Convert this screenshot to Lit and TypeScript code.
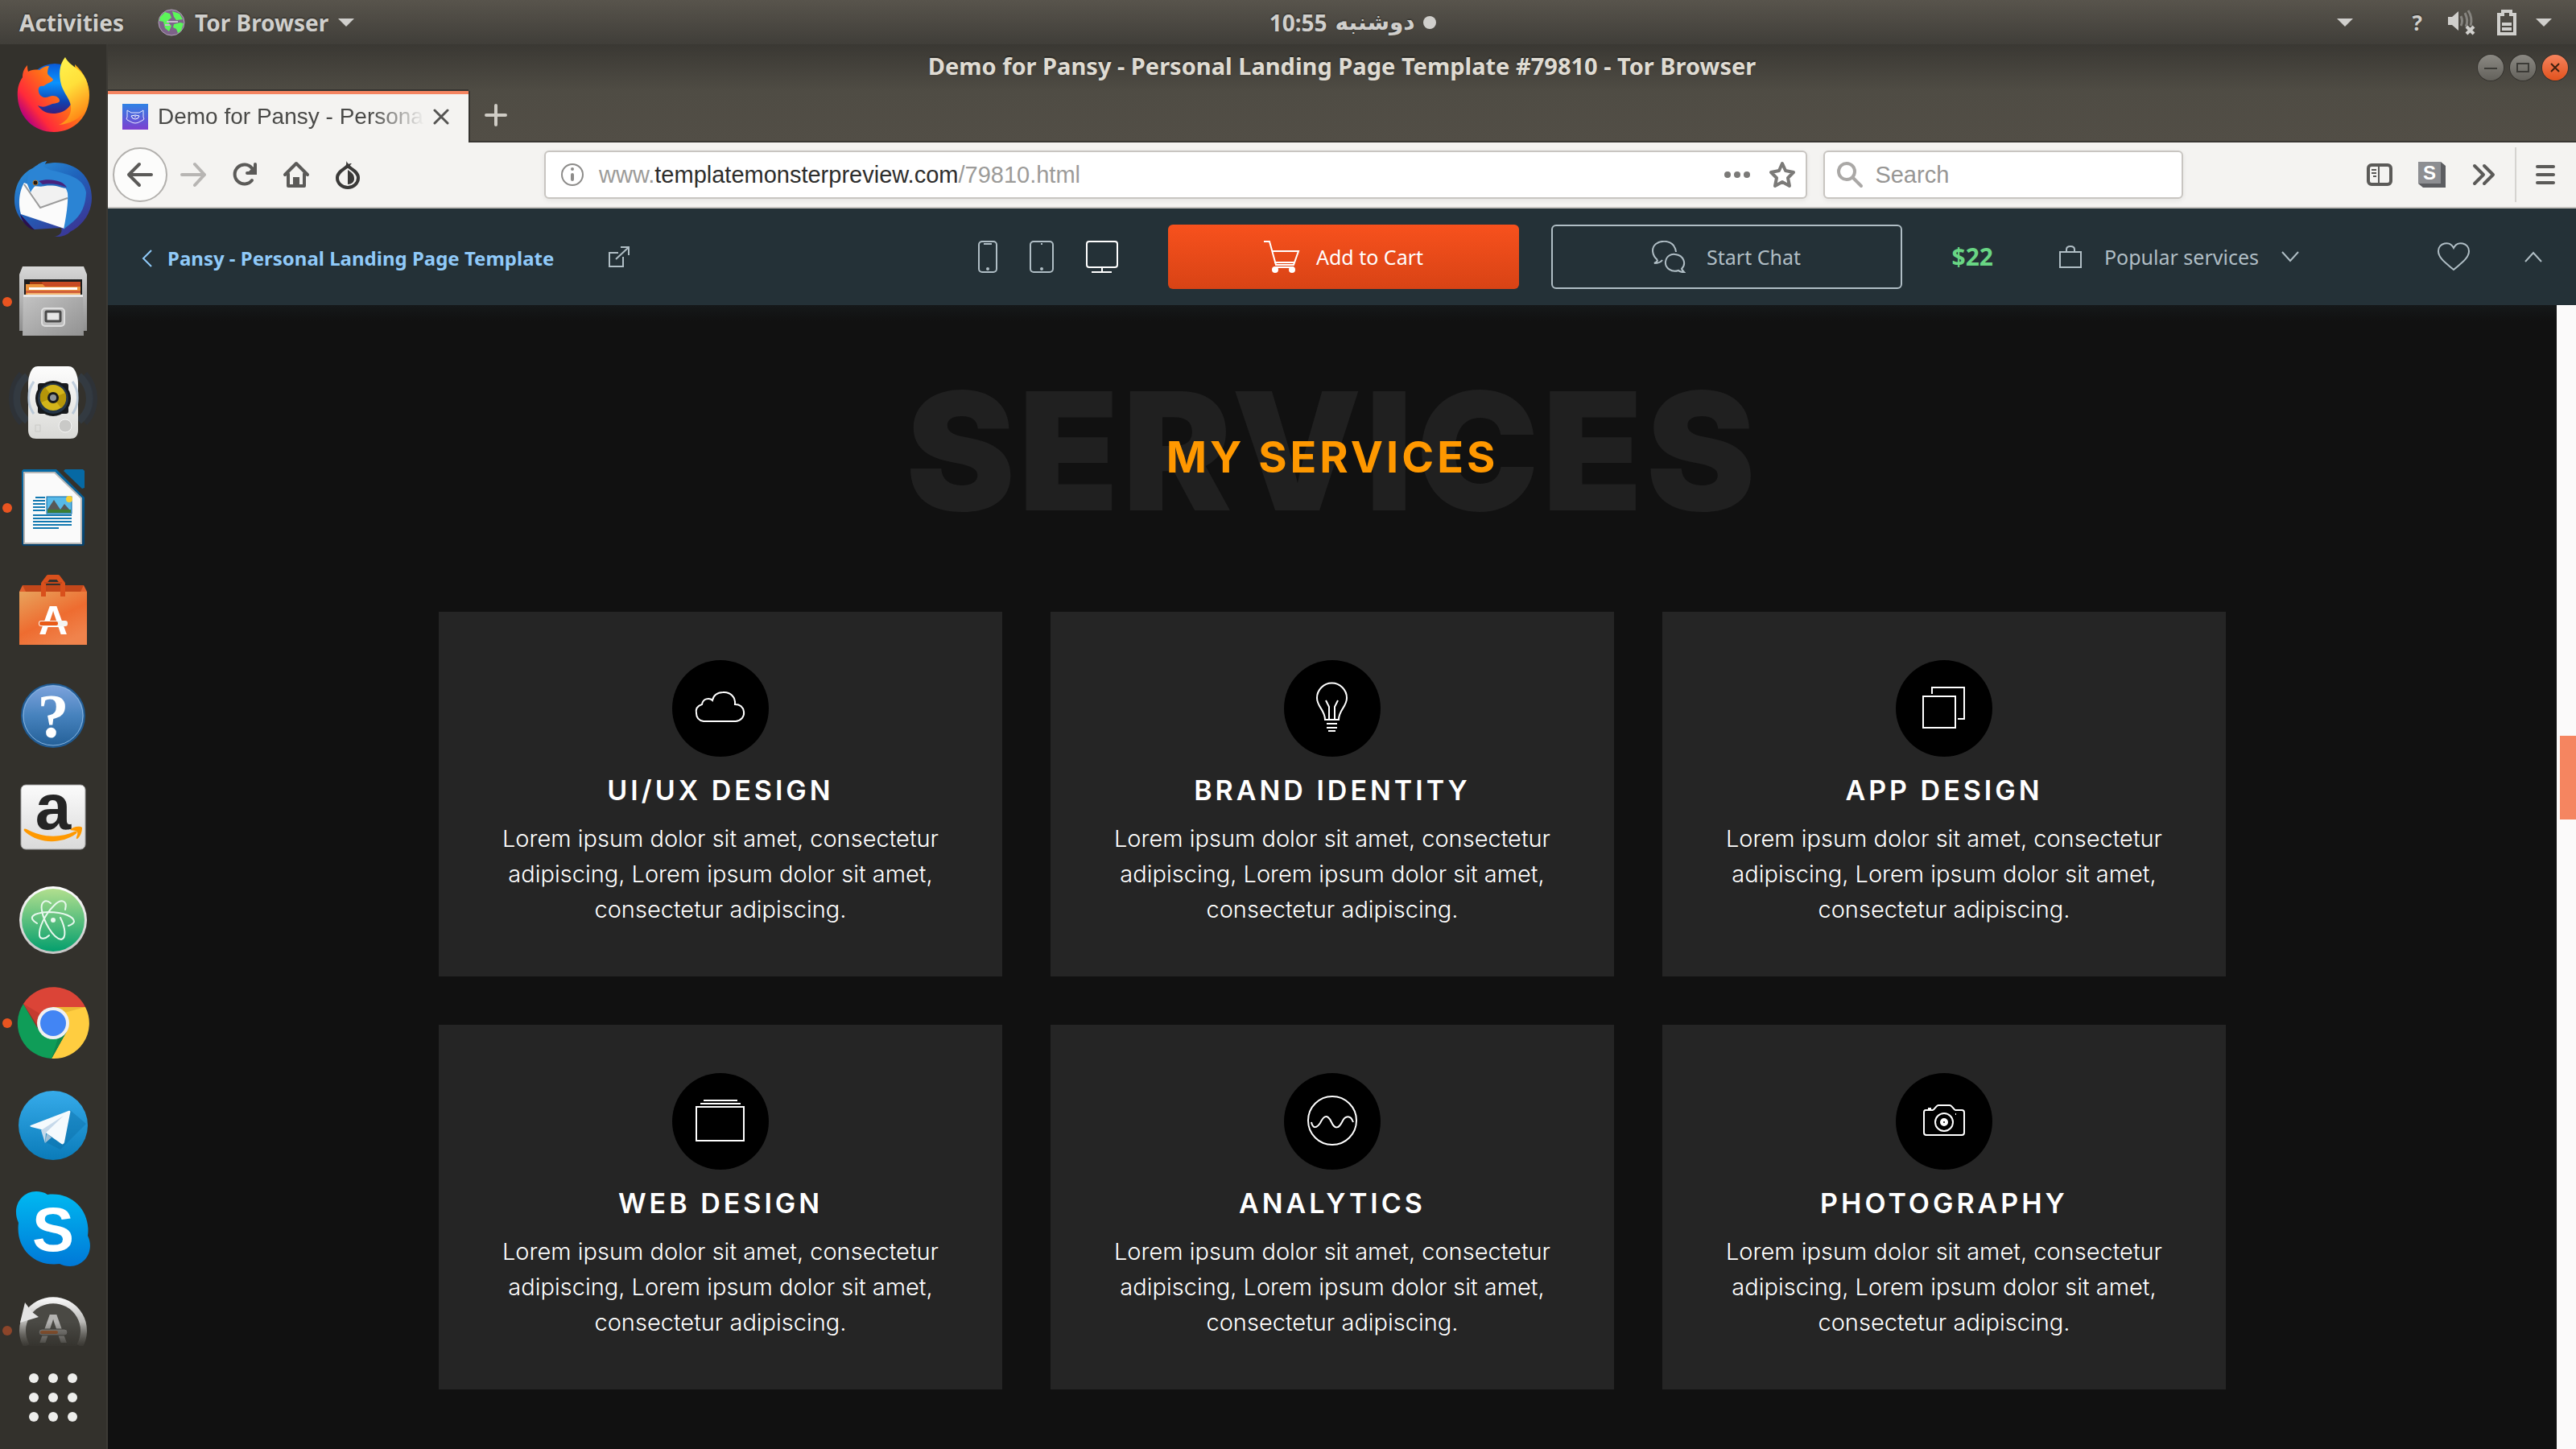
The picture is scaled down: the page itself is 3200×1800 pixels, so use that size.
import { LitElement, html, svg, css, TemplateResult, SVGTemplateResult } from "lit";
import { customElement } from "lit/decorators.js";

interface DockEntry {
  label: string;
  art: TemplateResult;
  fading?: boolean;
}

interface Service {
  title: string;
  art: SVGTemplateResult;
}

const LOREM =
  "Lorem ipsum dolor sit amet, consectetur adipiscing, Lorem ipsum dolor sit amet, consectetur adipiscing.";

const firefox = html`<svg viewBox="0 0 132 96">
  <defs>
    <linearGradient id="ff-body" x1="0.1" y1="0.8" x2="0.9" y2="0.2">
      <stop offset="0" stop-color="#b5007f" /><stop offset="0.2" stop-color="#ff2a3a" />
      <stop offset="0.55" stop-color="#ff6a1a" /><stop offset="1" stop-color="#ffb515" />
    </linearGradient>
    <linearGradient id="ff-tail" x1="0" y1="0" x2="0.3" y2="1">
      <stop offset="0" stop-color="#fff44f" /><stop offset="0.5" stop-color="#ffe03a" /><stop offset="1" stop-color="#ff8a16" />
    </linearGradient>
    <linearGradient id="ff-globe" x1="0.5" y1="0" x2="0.5" y2="1">
      <stop offset="0" stop-color="#0a5ad8" /><stop offset="0.35" stop-color="#0a93ff" />
      <stop offset="0.7" stop-color="#1042b0" /><stop offset="1" stop-color="#4a1067" />
    </linearGradient>
  </defs>
  <circle cx="68" cy="43" r="34" fill="url(#ff-globe)" />
  <path fill="url(#ff-body)" d="M34 11c-5 5-6 10-6 15-5 7-7 15-6 26 2 24 20 42 45 42 26 0 44-20 44-46 0-14-6-27-18-38 1 14 2 24 0 33-1 18-12 28-27 28-9 0-15-4-19-10 8 4 12 0 18-2 5-1 9-1 9-4 0-4-6-8-13-5-7 3-12-1-13-6-1-5 1-8 6-7 5-4 11-5 12-8-1-3-7-5-7-8 0-4 1-7 2-9-5 0-9 2-12 5-6-1-11 0-14 2-1-3-1-6-1-8z" />
  <path fill="url(#ff-tail)" d="M81 1c-8 10-8 22-5 34 4 13 14 21 12 32-1 8-7 15-15 18 14-1 26-7 33-18 6-12 5-27 1-38-5-13-21-17-26-28z" />
</svg>`;

const thunderbird = html`<svg viewBox="0 0 132 96">
  <defs>
    <linearGradient id="tb-body" x1="0" y1="0" x2="0.7" y2="1">
      <stop offset="0" stop-color="#2f9ae0" /><stop offset="0.5" stop-color="#1f63bb" /><stop offset="1" stop-color="#3b3595" />
    </linearGradient>
  </defs>
  <path fill="url(#tb-body)" d="M58 2c-6 1-10 3-13 7-17 6-27 21-27 42 0 15 8 28 25 36l33-2c2 6-2 10-9 11 10 1 18-3 20-6 14-7 27-22 27-42C114 22 96 4 68 4c-4 0-9 1-13 2z" />
  <path fill="#29104f" d="M25 68l18 20c-10-3-16-11-18-20z" />
  <path fill="#fbfbfb" d="M30 29c-6 10-8 26-4 39l54 18c6-14 9-28 4-50L40 33z" />
  <path fill="#f1f1f1" d="M39 40c12-10 33-9 44-2v10L50 60z" />
  <path fill="none" stroke="#9b9b9b" stroke-width="2" d="M30 31l20 29 34-12" />
  <path fill="#2b84d4" d="M58 2c-20 6-25 17-24 29l4 10c3-7 9-12 18-13 12-1 26 2 28 14 1 12-2 30-5 45 12-10 27-18 28-46C104 22 82 18 62 13l-8-4z" />
  <path fill="#46237e" d="M48 27c13-4 31-1 35 8-8-4-20-6-30-4z" />
  <circle cx="44" cy="29" r="3" fill="#241a10" stroke="#b9772b" />
</svg>`;

const files = html`<svg viewBox="0 0 132 96">
  <defs>
    <linearGradient id="fi-a" x1="0" y1="0" x2="0" y2="1"><stop offset="0" stop-color="#d8d8d8" /><stop offset="1" stop-color="#8f8f8f" /></linearGradient>
    <linearGradient id="fi-b" x1="0" y1="0" x2="1" y2="1"><stop offset="0" stop-color="#c4c4c4" /><stop offset="1" stop-color="#929292" /></linearGradient>
  </defs>
  <path fill="url(#fi-a)" d="M28 5h76l4 10v70H24V15z" />
  <rect x="30" y="21" width="72" height="22" fill="#1d1d1d" />
  <path fill="#a83c12" d="M37 24h60v10H37z" /><path fill="#c74a22" d="M52 24h48v8H54z" />
  <path fill="#ed953d" d="M32 27h21l3 3h44v12H32z" /><path fill="#fff" d="M36 31h60v3H36z" /><path fill="#d1603a" d="M32 35h68v3H32z" /><path fill="#f3b772" d="M34 38h66v4H34z" />
  <path fill="url(#fi-b)" d="M29 40h74l1 51H28z" /><path fill="#e8e8e8" d="M29 40h74v3H29z" />
  <rect x="52" y="57" width="28" height="22" rx="4" fill="#bdbdbd" stroke="#dedede" stroke-width="2" />
  <rect x="57" y="61" width="18" height="12" rx="1" fill="#e6e6e6" stroke="#4a4a4a" stroke-width="3" />
  <circle cx="9" cy="49" r="6" fill="#e95420" />
</svg>`;

const rhythmbox = html`<svg viewBox="0 0 132 96">
  <defs><linearGradient id="rb" x1="0" y1="0" x2="0" y2="1"><stop offset="0" stop-color="#fdfdfd" /><stop offset="1" stop-color="#d9d9d6" /></linearGradient></defs>
  <g fill="none" stroke="#34465c" stroke-width="9" opacity="0.45"><path d="M34 13a36 36 0 0 0 0 56M98 13a36 36 0 0 1 0 56" /></g>
  <path fill="none" stroke="#2b3440" stroke-width="6" opacity="0.6" d="M26 10a46 46 0 0 0 0 62M106 10a46 46 0 0 1 0 62" />
  <path fill="url(#rb)" d="M47 1h38c5 0 7 3 9 7 2 5 3 9 3 14v58c0 8-4 11-10 11H45c-6 0-10-3-10-11V22c0-5 1-9 3-14 2-4 4-7 9-7z" />
  <g fill="none" stroke="#9fb6cf" stroke-width="3" opacity="0.6"><path d="M42 20a34 34 0 0 0 0 40M90 20a34 34 0 0 1 0 40" /></g>
  <rect x="47" y="22" width="38" height="38" rx="3" fill="#191b1e" />
  <circle cx="66" cy="41" r="22" fill="#15181b" /><circle cx="66" cy="41" r="19" fill="#253547" />
  <circle cx="66" cy="40" r="16" fill="#d3b51a" /><path fill="#b59509" d="M66 40l15-6a16 16 0 0 1-5 19zM66 40l-15 6a16 16 0 0 1 5-19z" />
  <circle cx="66" cy="40" r="7" fill="#17191b" /><circle cx="66" cy="40" r="4" fill="#8e9499" />
  <circle cx="81" cy="75" r="8" fill="#c9c9c7" stroke="#f5f5f4" stroke-width="1" /><rect x="44" y="74" width="6" height="8" fill="none" stroke="#c9c9c6" />
</svg>`;

const writer = html`<svg viewBox="0 0 132 96">
  <defs><linearGradient id="wr" x1="0" y1="0" x2="0" y2="1"><stop offset="0" stop-color="#0669a4" /><stop offset="1" stop-color="#07406a" /></linearGradient></defs>
  <path fill="url(#wr)" d="M29 1h41l35 35v58l-2 3H29l-2-3V3z" />
  <path fill="#fafafa" stroke="#b6b6b6" stroke-width="2" d="M30 5h38l33 32v56H30z" />
  <path fill="#0669a4" d="M79 3l2-2h22l2 2v21l-3 1z" />
  <g stroke="#1278b0" stroke-width="2"><path d="M44 36h12M41 40h15M41 44h15M41 48h15M41 52h15M41 58h48M41 62h48M41 66h48M41 70h48M41 74h32" /></g>
  <rect x="58" y="35" width="31" height="21" fill="#57b9e8" stroke="#0c6ba5" /><circle cx="86" cy="38" r="4" fill="#f8cf32" />
  <path fill="#575757" d="M59 51l8-12 8 12 5-7 7 8z" /><path fill="#3b7d33" d="M59 51h29v4H59z" />
  <circle cx="9" cy="49" r="6" fill="#e95420" />
</svg>`;

const software = html`<svg viewBox="0 0 132 96">
  <defs><linearGradient id="so" x1="0" y1="0" x2="0.6" y2="1"><stop offset="0" stop-color="#e8a35c" /><stop offset="0.6" stop-color="#ee6c30" /><stop offset="1" stop-color="#f0834c" /></linearGradient></defs>
  <path fill="#c3471a" d="M28 17h76v10H28z" /><path fill="#e2602d" d="M24 25l4-8 4 8zM108 25l-4-8-4 8z" />
  <path fill="url(#so)" d="M24 25h84v66H24z" />
  <path fill="none" stroke="#d9501c" stroke-width="6" stroke-linejoin="round" d="M54 31V15l6-8h12l6 8v16" /><path stroke="#c3471a" stroke-width="2" d="M55 14h22" />
  <text x="66" y="78" text-anchor="middle" class="glyph glyph-bag">A</text>
  <rect x="48" y="61" width="36" height="7" rx="3" fill="#f4f4f2" /><rect x="49" y="62" width="23" height="5" rx="2" fill="#e95a17" />
</svg>`;

const help = html`<svg viewBox="0 0 132 96">
  <defs><linearGradient id="he" x1="0" y1="0" x2="0" y2="1"><stop offset="0" stop-color="#7fa4de" /><stop offset="0.5" stop-color="#4682bd" /><stop offset="1" stop-color="#235f97" /></linearGradient></defs>
  <circle cx="66" cy="51" r="39" fill="url(#he)" stroke="#1f5a92" stroke-width="2" /><circle cx="66" cy="51" r="37" fill="none" stroke="#86b3de" stroke-width="1" />
  <text x="66" y="78" text-anchor="middle" class="glyph glyph-help">?</text>
</svg>`;

const amazon = html`<svg viewBox="0 0 132 96">
  <defs><linearGradient id="am" x1="0" y1="0" x2="0" y2="1"><stop offset="0" stop-color="#fbfbfb" /><stop offset="1" stop-color="#dadada" /></linearGradient></defs>
  <rect x="26" y="9" width="80" height="80" rx="6" fill="url(#am)" stroke="#9d9d9d" />
  <text x="66" y="64" text-anchor="middle" class="glyph glyph-amazon">a</text>
  <path fill="#ff9900" d="M30 64c1-1 2 0 3 0 19 11 43 11 59 3 3-1 5 1 2 3-18 13-46 12-62-2-2-2-3-3-2-4z" />
  <path fill="#ff9900" d="M87 65c4-5 13-5 15-3 0 5-2 11-6 14-2 0-1-2 0-5 1-4 0-5-9-6z" />
</svg>`;

const atom = html`<svg viewBox="0 0 132 96">
  <defs>
    <linearGradient id="at" x1="0" y1="0" x2="0" y2="1"><stop offset="0" stop-color="#b2df8e" /><stop offset="1" stop-color="#049f6d" /></linearGradient>
    <linearGradient id="at-rim" x1="0" y1="0" x2="0" y2="1"><stop offset="0" stop-color="#ffffff" /><stop offset="1" stop-color="#c4c4c4" /></linearGradient>
  </defs>
  <circle cx="66" cy="49" r="42" fill="url(#at-rim)" /><circle cx="66" cy="49" r="39" fill="url(#at)" />
  <g fill="none" stroke="#e8f8ee" stroke-width="2" stroke-linecap="round">
    <path d="M46 53C34 46 40 40 60 39C80 39 92 45 92 51C91 54 88 55 85 56" />
    <path d="M63 28C56 22 50 27 52 37C54 50 66 72 76 73C83 71 81 58 75 46" />
    <path d="M81 36C84 24 76 22 67 31C56 42 48 58 49 68C50 74 57 72 61 68" />
  </g>
  <circle cx="66" cy="49" r="3" fill="#e8f8ee" />
</svg>`;

const chrome = html`<svg viewBox="0 0 132 96">
  <path fill="#ffcd40" d="M66 29h40a44 44 0 0 1-42 64l19-34z" />
  <path fill="#0f9d58" d="M64 93A44 44 0 0 1 29 25l20 34 34 0z" />
  <path fill="#db4437" d="M29 25a44 44 0 0 1 77 4H66c-11 0-19 10-19 24z" />
  <path fill="#b5362b" opacity="0.6" d="M29 25l17 30c0-8 2-13 5-17z" /><path fill="#0b7d46" opacity="0.6" d="M81 62L64 93l8-25z" />
  <path fill="#e0a92f" opacity="0.6" d="M66 29h40l-26 7z" />
  <circle cx="66" cy="49" r="20" fill="#f1f1f1" /><circle cx="66" cy="49" r="16" fill="#4285f4" />
  <circle cx="9" cy="49" r="6" fill="#e95420" />
</svg>`;

const telegram = html`<svg viewBox="0 0 132 96">
  <defs><linearGradient id="te" x1="0" y1="0" x2="0" y2="1"><stop offset="0" stop-color="#36abea" /><stop offset="1" stop-color="#0a7bb9" /></linearGradient></defs>
  <circle cx="66" cy="48" r="43" fill="url(#te)" />
  <path fill="#0a6ba5" opacity="0.4" d="M87 29l20 17-32 32-18-9z" />
  <path fill="#f5fafd" d="M38 48l47-18c2-1 3 0 2 3l-7 36c-1 3-3 3-5 1L58 58l-7-5-12-3c-2-1-2-1-1-2z" />
  <path fill="#c6d9ea" d="M51 54l28-18-22 21-1 13z" /><path fill="#9fbdd4" d="M58 58l6 5-8 7z" />
</svg>`;

const skype = html`<svg viewBox="0 0 132 96">
  <defs><linearGradient id="sk" x1="0" y1="0" x2="0" y2="1"><stop offset="0" stop-color="#00b9f1" /><stop offset="1" stop-color="#0078d7" /></linearGradient></defs>
  <path fill="url(#sk)" d="M45 2c5 0 10 1 14 4 32-4 54 22 50 51 9 19-4 38-22 38-5 0-9-1-13-3-31 4-55-19-51-51C14 22 26 2 45 2z" />
  <text x="66" y="76" text-anchor="middle" class="glyph glyph-skype">S</text>
</svg>`;

const updater = html`<svg viewBox="0 0 132 66">
  <defs>
    <linearGradient id="up" x1="0" y1="0" x2="0" y2="1"><stop offset="0" stop-color="#f5f5f5" /><stop offset="1" stop-color="#77756f" /></linearGradient>
    <linearGradient id="up-fade" x1="0" y1="0" x2="0" y2="1"><stop offset="0.55" stop-color="#33312c" stop-opacity="0" /><stop offset="1" stop-color="#33312c" stop-opacity="0.9" /></linearGradient>
  </defs>
  <circle cx="66" cy="47" r="35" fill="#4a4944" />
  <path fill="none" stroke="url(#up)" stroke-width="8" d="M33 66A38 38 0 1 1 99 66" />
  <path fill="#e4e4e4" d="M31 12l-6 25 23-7-8-6z" />
  <text x="66" y="62" text-anchor="middle" class="glyph glyph-up">A</text>
  <rect x="48" y="45" width="36" height="8" rx="4" fill="#8b8a87" stroke="#454440" /><rect x="50" y="47" width="22" height="4" rx="2" fill="#a85b2b" />
  <path fill="url(#up-fade)" d="M14 0h104v66H14z" />
  <circle cx="9" cy="47" r="6" fill="#8c452a" />
</svg>`;

const DOCK: DockEntry[] = [
  { label: "Firefox", art: firefox },
  { label: "Thunderbird", art: thunderbird },
  { label: "Files", art: files },
  { label: "Rhythmbox", art: rhythmbox },
  { label: "Writer", art: writer },
  { label: "Software", art: software },
  { label: "Help", art: help },
  { label: "Amazon", art: amazon },
  { label: "Atom", art: atom },
  { label: "Chrome", art: chrome },
  { label: "Telegram", art: telegram },
  { label: "Skype", art: skype },
  { label: "Updater", art: updater, fading: true },
];

const SERVICES: Service[] = [
  {
    title: "UI/UX DESIGN",
    art: svg`<path d="M39 76H79C86 75 90 70 89 64C88 58 84 55 78 55C79 46 72 39 63 40C56 40 51 44 50 50C46 46 38 48 37 55C31 57 29 61 30 66C30 71 33 75 39 76Z" />`,
  },
  {
    title: "BRAND IDENTITY",
    art: svg`<path d="M51 74C51 62 41 58 41 47a18 18 0 0 1 37 0C78 58 68 62 68 74Z" /><path d="M52 50l4 8v16M67 50l-4 8v16M53 79h13M53 84h13M55 88h9" />`,
  },
  {
    title: "APP DESIGN",
    art: svg`<path d="M34 45h40v39H34zM45 42V34H85V73H77" />`,
  },
  {
    title: "WEB DESIGN",
    art: svg`<path d="M30 42h59v42H30zM39 34h42M35 38h50" />`,
  },
  {
    title: "ANALYTICS",
    art: svg`<circle cx="60" cy="59" r="30" /><path d="M34 61C36 70 41 68 45 62C48 56 53 48 59 61C63 70 68 69 72 61C76 52 83 52 86 61" />`,
  },
  {
    title: "PHOTOGRAPHY",
    art: svg`<path d="M37 46h9c2 0 4-6 7-6h14c3 0 5 6 7 6h8q3 0 3 3v25q0 3-3 3H38q-3 0-3-3V49q0-3 2-3zM40 44h4" /><circle cx="60" cy="61" r="11" /><circle cx="60" cy="61" r="3" class="heavy" /><path d="M74 51h1" />`,
  },
];

@customElement("desktop-dock")
export class DesktopDock extends LitElement {
  static styles = css`
    :host { display: block; background: #33312c; border-right: 2px solid #3c3a35; }
    .list { display: flex; flex-direction: column; gap: 32px; padding-top: 15px; }
    button { display: block; border: 0; padding: 0; margin: 0; background: none; }
    .app { width: 132px; height: 96px; }
    .fading { height: 66px; }
    .grid { width: 132px; height: 60px; margin-top: 2px; }
    svg { display: block; width: 100%; height: 100%; }
    .glyph { font-family: "Liberation Sans", sans-serif; font-weight: 700; fill: #fff; }
    .glyph-bag { font-size: 50px; }
    .glyph-help { font-family: "Liberation Serif", serif; font-size: 78px; }
    .glyph-amazon { font-size: 80px; fill: #252525; }
    .glyph-skype { font-size: 78px; }
    .glyph-up { font-size: 50px; fill: #b4b3b1; }
  `;

  render() {
    const steps = [0, 1, 2];
    return html`<nav class="list" aria-label="Applications">
      ${DOCK.map((d) => html`<button class="app ${d.fading ? "fading" : ""}" aria-label=${d.label}>${d.art}</button>`)}
      <button class="grid" aria-label="Show applications">
        <svg viewBox="0 0 132 60" fill="#eeeeec">
          ${steps.map((r) => steps.map((c) => svg`<circle cx=${42 + c * 24} cy=${6 + r * 24} r="6" />`))}
        </svg>
      </button>
    </nav>`;
  }
}

@customElement("system-bar")
export class SystemBar extends LitElement {
  static styles = css`
    :host {
      display: grid; grid-template-columns: 1573fr auto 1413fr; align-items: center; height: 55px;
      background: linear-gradient(#58544c, #403e39); color: #d0cfcc;
      font: 700 28px/40px "Noto Sans", "Open Sans", "DejaVu Sans", sans-serif; text-shadow: 0 -1px 2px #2a2925;
    }
    button { font: inherit; color: inherit; background: none; border: 0; padding: 0; display: flex; align-items: center; text-shadow: inherit; }
    svg { display: block; }
    .left, .right { display: flex; align-items: center; }
    .left { padding-left: 24px; gap: 42px; }
    .app { gap: 12px; }
    .clock { gap: 10px; white-space: nowrap; }
    .day { font-family: "DejaVu Sans", sans-serif; }
    .right { justify-content: flex-end; padding-right: 30px; }
    .menu { margin-right: 74px; }
    .unknown { margin-right: 32px; font-size: 26px; }
    .sound { margin-right: 27px; }
    .battery { margin-right: 24px; }
  `;

  render() {
    const caret = html`<svg width="20" height="12" viewBox="0 0 20 12"><path fill="#d0cfcc" d="M0 1h20L10 11z" /></svg>`;
    return html`
      <div class="left">
        <button>Activities</button>
        <button class="app">
          <svg width="34" height="34" viewBox="0 0 34 34">
            <circle cx="17" cy="17" r="16" fill="#7d6389" stroke="#b5a4bd" />
            <path fill="#5cf65a" d="M3 10l6-6 6 2 2 5-4 3 1 4 3 3-3 7-5-4-2-8-5-1zM20 19l8-2 4 1-3 9-4 3-2-5-4-2zM18 3l9 3 4 7-8 1-3-4z" />
            <path stroke="#c9b9d0" stroke-width="2" d="M11 16h10M9 20h6M20 16h5" />
          </svg>
          Tor Browser ${caret}
        </button>
      </div>
      <button class="clock">
        <span>10:55</span>
        <span class="day" dir="rtl">دوشنبه</span>
        <svg width="16" height="16" viewBox="0 0 16 16"><circle cx="8" cy="8" r="8" fill="#d0cfcc" /></svg>
      </button>
      <div class="right">
        <button class="menu" aria-label="Menu">${caret}</button>
        <button class="unknown" aria-label="Network">?</button>
        <button class="sound" aria-label="Sound">
          <svg width="34" height="32" viewBox="0 0 34 32">
            <path fill="#d0cfcc" d="M0 9h5l8-7v24l-8-7H0z" />
            <g fill="none" stroke="#85837e" stroke-width="3"><path d="M16 8q3 6 0 12M21 4q5 10 1 17M25 1q6 9 3 19" /></g>
            <path stroke="#d0cfcc" stroke-width="4" d="M23 21l9 9M32 21l-9 9" />
          </svg>
        </button>
        <button class="battery" aria-label="Battery">
          <svg width="24" height="32" viewBox="0 0 24 32">
            <path fill="none" stroke="#d0cfcc" stroke-width="4" d="M2 6h5V2h10v4h5v24H2z" />
            <path fill="#d0cfcc" d="M6 16h12v4H6zM6 22h12v4H6z" />
          </svg>
        </button>
        <button aria-label="System menu">${caret}</button>
      </div>
    `;
  }
}

@customElement("browser-chrome")
export class BrowserChrome extends LitElement {
  static styles = css`
    :host { display: block; font: 28px/40px "Liberation Sans", Arial, sans-serif; color: #4a4a48; }
    button { font: inherit; color: inherit; background: none; border: 0; padding: 0; display: flex; align-items: center; justify-content: center; flex: none; }
    svg { display: block; flex: none; }
    .title {
      display: grid; grid-template-columns: 1fr auto 1fr; align-items: center; height: 58px; padding: 0 10px;
      background: linear-gradient(#3a3833, #4f4c44); color: #dfdbd2;
      font: 700 29px/44px "Noto Sans", "Open Sans", sans-serif; text-shadow: 0 -2px 1px #2d2c28; white-space: nowrap;
    }
    .name { grid-column: 2; padding-bottom: 4px; }
    .controls { display: flex; justify-content: flex-end; gap: 8px; }
    .ctl { width: 32px; height: 32px; border-radius: 50%; background: linear-gradient(#8b8983, #63615b); box-shadow: 0 0 0 1px #34322e; }
    .close { background: linear-gradient(#f5835d, #e2521d); }
    .tabs { display: flex; height: 64px; background: linear-gradient(#4f4c44, #524e46); box-shadow: inset 0 -2px #393733; }
    .tab { display: flex; align-items: center; width: 448px; box-sizing: border-box; background: #f4f3f1; border-top: 4px solid #f58460; padding: 0 24px 4px 18px; box-shadow: 0 -2px #35332f, 2px 0 #35332f; }
    .label { flex: 1; min-width: 0; margin: 0 10px 0 12px; overflow: hidden; white-space: nowrap; -webkit-mask-image: linear-gradient(90deg, #000 80%, transparent); mask-image: linear-gradient(90deg, #000 80%, transparent); }
    .add { padding: 0 20px; height: 60px; }
    .bar {
      display: grid; grid-template-columns: 536px minmax(0, 1568fr) minmax(0, 466fr) minmax(0, 228fr) auto; align-items: center;
      height: 80px; background: #f4f3f1; border-bottom: 2px solid #c4c2bf; padding: 0 22px 0 6px; font-size: 29px;
    }
    .nav { display: flex; align-items: center; gap: 28px; }
    .back { width: 68px; height: 68px; box-sizing: border-box; border: 2px solid #b2b0ad; border-radius: 50%; background: #fcfcfb; margin-right: -14px; }
    .field { display: flex; align-items: center; box-sizing: border-box; height: 60px; background: #fff; border: 2px solid #c8c5c1; border-radius: 6px; box-shadow: 0 2px 6px #00000012; min-width: 0; }
    .url { padding: 0 12px 0 18px; }
    .address { flex: 1; margin-left: 18px; color: #9c9b99; white-space: nowrap; }
    .address b { font-weight: 400; color: #2d2d2c; }
    .more { margin-right: 22px; }
    .search { margin-left: 20px; padding: 0 14px; gap: 14px; }
    input { flex: 1; min-width: 0; border: 0; outline: 0; background: none; font: inherit; color: #333; padding: 0; }
    input::placeholder { color: #979694; opacity: 1; }
    .tools { grid-column: 5; display: flex; align-items: center; gap: 32px; }
    .rule { width: 2px; height: 68px; background: #d5d3d0; margin: 0 -12px 0 -10px; }
  `;

  render() {
    return html`
      <div class="title">
        <span class="name">Demo for Pansy - Personal Landing Page Template #79810 - Tor Browser</span>
        <div class="controls">
          <button class="ctl" aria-label="Minimize"><svg width="32" height="32" viewBox="0 0 32 32"><path stroke="#3c3b37" stroke-width="2" d="M8 17h16" /></svg></button>
          <button class="ctl" aria-label="Maximize"><svg width="32" height="32" viewBox="0 0 32 32"><path fill="none" stroke="#3c3b37" stroke-width="2" d="M9 11h14v10H9z" /></svg></button>
          <button class="ctl close" aria-label="Close"><svg width="32" height="32" viewBox="0 0 32 32"><path stroke="#3c2010" stroke-width="2" d="M11 11l10 10M21 11L11 21" /></svg></button>
        </div>
      </div>
      <div class="tabs">
        <div class="tab">
          <svg width="32" height="32" viewBox="0 0 32 32">
            <defs><linearGradient id="fav" x1="0" y1="0" x2="0" y2="1"><stop offset="0" stop-color="#2f82e4" /><stop offset="1" stop-color="#7d3fd0" /></linearGradient></defs>
            <path fill="url(#fav)" d="M0 0h32v32H0z" />
            <path fill="none" stroke="#e6e6ff" stroke-width="1" d="M6 8l5 3h10l5-3v9l1 1-1 2-4 2q-6 4-12 0l-4-2-1-2 1-1z" />
            <path fill="none" stroke="#fff" stroke-width="1" d="M11 15q5-2 10 0-1 4-5 4t-5-4zM15 16h2" />
          </svg>
          <span class="label">Demo for Pansy - Personal Landing</span>
          <button aria-label="Close tab"><svg width="20" height="20" viewBox="0 0 20 20"><path stroke="#555452" stroke-width="3" stroke-linecap="round" d="M2 2l16 16M18 2L2 18" /></svg></button>
        </div>
        <button class="add" aria-label="New tab"><svg width="28" height="28" viewBox="0 0 28 28"><path stroke="#cfccc5" stroke-width="4" stroke-linecap="round" d="M14 2v24M2 14h24" /></svg></button>
      </div>
      <div class="bar">
        <div class="nav">
          <button class="back" aria-label="Back"><svg width="36" height="36" viewBox="0 0 36 36"><path fill="none" stroke="#5b5a58" stroke-width="4" stroke-linecap="round" stroke-linejoin="round" d="M17 5L4 18l13 13M4 18h28" /></svg></button>
          <button aria-label="Forward"><svg width="36" height="36" viewBox="0 0 36 36"><path fill="none" stroke="#b7b5b3" stroke-width="4" stroke-linecap="round" stroke-linejoin="round" d="M20 5l12 13-12 13M32 18H4" /></svg></button>
          <button aria-label="Reload"><svg width="36" height="36" viewBox="0 0 36 36"><path fill="none" stroke="#5b5a58" stroke-width="4" stroke-linecap="round" d="M27 25A12 12 0 1 1 27 10M31 5v11H21" /><path fill="#5b5a58" d="M31 6v10H21z" /></svg></button>
          <button aria-label="Home"><svg width="36" height="36" viewBox="0 0 36 36"><path fill="none" stroke="#5b5a58" stroke-width="4" stroke-linecap="round" stroke-linejoin="round" d="M4 18L18 4l14 14M8 17v15h20V17" /><path fill="#5b5a58" d="M14 21h8v11h-8z" /></svg></button>
          <button aria-label="Tor circuit"><svg width="36" height="36" viewBox="0 0 36 36"><path fill="none" stroke="#3a3938" stroke-width="4" d="M18 7C14 11 5 14 5 22a13 12 0 0 0 26 0C31 14 22 11 18 7z" /><path fill="#3a3938" d="M16 1c1 3-1 5 0 9h5c-1-3 0-4 2-6-2 0-3 0-4 1zM18 12c6 4 8 6 8 11 0 4-3 7-8 7z" /></svg></button>
        </div>
        <div class="field url">
          <svg width="30" height="30" viewBox="0 0 30 30"><circle cx="15" cy="15" r="13" fill="none" stroke="#8d8c8a" stroke-width="2" /><path stroke="#8d8c8a" stroke-width="4" stroke-linecap="round" d="M15 15v6M15 8v0" /></svg>
          <span class="address" role="textbox" aria-label="Address">www.<b>templatemonsterpreview.com</b>/79810.html</span>
          <button class="more" aria-label="Page actions"><svg width="34" height="10" viewBox="0 0 34 10" fill="#7b7a78"><circle cx="5" cy="5" r="4" /><circle cx="17" cy="5" r="4" /><circle cx="29" cy="5" r="4" /></svg></button>
          <button aria-label="Bookmark"><svg width="34" height="34" viewBox="0 0 34 34"><path fill="none" stroke="#7b7a78" stroke-width="4" stroke-linejoin="round" d="M17 3l4 9 10 2-7 7 2 10-9-5-9 5 2-10-7-7 10-2z" /></svg></button>
        </div>
        <label class="field search">
          <svg width="34" height="34" viewBox="0 0 34 34"><circle cx="13" cy="13" r="10" fill="none" stroke="#aaa8a6" stroke-width="4" /><path stroke="#aaa8a6" stroke-width="4" stroke-linecap="round" d="M21 21l10 10" /></svg>
          <input type="text" placeholder="Search" aria-label="Search" />
        </label>
        <div class="tools">
          <button aria-label="Sidebars"><svg width="32" height="28" viewBox="0 0 32 28"><rect x="2" y="2" width="28" height="24" rx="4" fill="none" stroke="#5b5a58" stroke-width="4" /><path stroke="#5b5a58" stroke-width="2" d="M15 3v22M6 8h6M6 12h6M8 16h4" /></svg></button>
          <button aria-label="NoScript"><svg width="34" height="32" viewBox="0 0 34 32"><path fill="#5c5d61" d="M28 0l6 5v27H6l-6-5z" /><path fill="#8d8e92" d="M0 0h28v27H0z" /><text x="14" y="22" text-anchor="middle" font-size="24" font-weight="700" fill="#fff">S</text></svg></button>
          <button aria-label="More tools"><svg width="32" height="28" viewBox="0 0 32 28"><path fill="none" stroke="#5b5a58" stroke-width="4" stroke-linecap="round" stroke-linejoin="round" d="M4 3l11 11L4 25M16 3l11 11-11 11" /></svg></button>
          <span class="rule"></span>
          <button aria-label="Open menu"><svg width="32" height="28" viewBox="0 0 32 28"><path stroke="#5b5a58" stroke-width="4" stroke-linecap="round" d="M6 4h20M6 14h20M6 24h20" /></svg></button>
        </div>
      </div>
    `;
  }
}

@customElement("preview-header")
export class PreviewHeader extends LitElement {
  static styles = css`
    :host { display: flex; align-items: center; height: 120px; padding: 0 42px; background: #243137; color: #b0bec5; font: 25px/40px "Noto Sans", "Open Sans", sans-serif; white-space: nowrap; }
    svg { display: block; flex: none; fill: none; stroke: currentColor; stroke-width: 2; }
    a { color: #90caf9; text-decoration: none; font-size: 24px; font-weight: 700; display: flex; align-items: center; gap: 18px; padding-top: 4px; }
    button { font: inherit; color: inherit; background: none; border: 0; padding: 0; display: flex; align-items: center; justify-content: center; flex: none; }
    .lead { flex: 1; display: flex; align-items: center; gap: 68px; }
    .out { color: #b0bec5; }
    .devices { display: flex; align-items: center; gap: 40px; margin-right: 62px; }
    .desktop { color: #fff; }
    .action { width: 436px; height: 80px; box-sizing: border-box; border-radius: 6px; gap: 20px; }
    .cart { background: linear-gradient(#f7511d, #d84315); color: #fff; margin-right: 40px; }
    .chat { border: 2px solid #b0bec5; gap: 26px; }
    .price { margin: 0 82px 0 62px; color: #69d684; font-weight: 700; font-size: 30px; }
    .popular { gap: 28px; }
    .end { display: flex; align-items: center; gap: 68px; margin-left: 172px; }
  `;

  render() {
    return html`
      <div class="lead">
        <a href="#template"><svg width="14" height="22" viewBox="0 0 14 22"><path d="M12 1L2 11l10 10" /></svg>Pansy - Personal Landing Page Template</a>
        <button class="out" aria-label="Open in new window"><svg width="26" height="26" viewBox="0 0 26 26"><path d="M12 8H1v17h17V13M9 16L24 2M15 1h10v10" /></svg></button>
      </div>
      <div class="devices">
        <button aria-label="Phone"><svg width="24" height="40" viewBox="0 0 24 40"><rect x="1" y="1" width="22" height="38" rx="4" /><path d="M7 4h10" /><circle cx="12" cy="35" r="1" /></svg></button>
        <button aria-label="Tablet"><svg width="30" height="40" viewBox="0 0 30 40"><rect x="1" y="1" width="28" height="38" rx="4" /><path d="M14 4h2" /><circle cx="15" cy="35" r="1" /></svg></button>
        <button class="desktop" aria-label="Desktop"><svg width="40" height="40" viewBox="0 0 40 40"><rect x="1" y="1" width="38" height="32" rx="3" /><path d="M20 33v5M7 39h25" /></svg></button>
      </div>
      <button class="action cart"><svg width="46" height="40" viewBox="0 0 46 40"><path d="M1 1h7l8 29h22l6-17H12M14 27h25M16 33h22" /><circle cx="15" cy="36" r="3" fill="currentColor" /><circle cx="36" cy="36" r="3" fill="currentColor" /></svg>Add to Cart</button>
      <button class="action chat"><svg width="42" height="40" viewBox="0 0 42 40"><path d="M7 24C0 18-1 9 5 4C12-1 22 0 27 6C29 9 30 11 30 14M7 24c0 2-2 3-4 4c4 0 8-1 10-4" /><path d="M37 35c1 2 2 3 3 4c-3 0-6-1-7-2C25 40 16 34 17 26C18 19 24 16 29 17C40 18 43 29 37 35z" /></svg>Start Chat</button>
      <span class="price">$22</span>
      <button class="popular"><svg width="28" height="28" viewBox="0 0 28 28"><path d="M1 8h26v19H1zM9 8V5q0-4 5-4t5 4v3" /></svg>Popular services<svg width="22" height="14" viewBox="0 0 22 14"><path d="M1 1l10 11L21 1" /></svg></button>
      <div class="end">
        <button aria-label="Favourite"><svg width="40" height="36" viewBox="0 0 40 36"><path d="M20 34C12 27 1 20 1 11C1 1 15-3 20 7C25-3 39 1 39 11C39 20 28 27 20 34z" /></svg></button>
        <button aria-label="Collapse"><svg width="22" height="14" viewBox="0 0 22 14"><path d="M1 13L11 2l10 11" /></svg></button>
      </div>
    `;
  }
}

@customElement("services-section")
export class ServicesSection extends LitElement {
  static styles = css`
    :host { display: block; padding: 81px 60px 74px; background: linear-gradient(#151819, #111 20px); color: #fff; text-align: center; }
    .heading { display: grid; justify-items: center; align-items: center; margin-bottom: 100px; font-family: Inter, "Open Sans", sans-serif; letter-spacing: 4px; }
    .ghost { grid-area: 1 / 1; font-size: 204px; line-height: 200px; font-weight: 900; color: #202020; }
    h2 { grid-area: 1 / 1; margin: 0; padding-top: 16px; font-size: 54px; line-height: 60px; font-weight: 700; color: #ff9800; }
    .cards { display: grid; grid-template-columns: repeat(3, 1fr); gap: 60px; max-width: 2220px; margin: 0 auto; }
    .card { background: #252525; padding: 60px 60px 61px; }
    .disc { display: block; width: 120px; height: 120px; margin: 0 auto 20px; border-radius: 50%; background: #000; fill: none; stroke: #fff; stroke-width: 2; }
    .heavy { stroke-width: 4; }
    h3 { margin: 0 0 16px; font: 600 34px/44px Inter, "Open Sans", sans-serif; letter-spacing: 4px; }
    p { margin: 0; font: 300 29px/44px Inter, "Open Sans", sans-serif; }
  `;

  render() {
    return html`
      <div class="heading"><span class="ghost">SERVICES</span><h2>MY SERVICES</h2></div>
      <div class="cards">
        ${SERVICES.map((s) => html`<article class="card">
          <svg class="disc" viewBox="0 0 120 120">${s.art}</svg>
          <h3>${s.title}</h3>
          <p>${LOREM}</p>
        </article>`)}
      </div>
    `;
  }
}

@customElement("app-root")
export class AppRoot extends LitElement {
  static styles = css`
    :host { display: block; background: #111; }
    .desk { display: grid; grid-template-columns: 134px minmax(0, 1fr); }
    .view { display: flex; }
    services-section { flex: 1; min-width: 0; }
    .track { width: 20px; padding-left: 4px; display: flex; flex-direction: column; background: #fbfafa; }
    .above { flex: 535; }
    .thumb { flex: 104; background: #f58560; }
    .below { flex: 782; }
  `;

  render() {
    return html`
      <system-bar></system-bar>
      <div class="desk">
        <desktop-dock></desktop-dock>
        <main>
          <browser-chrome></browser-chrome>
          <preview-header></preview-header>
          <div class="view">
            <services-section></services-section>
            <div class="track"><span class="above"></span><span class="thumb"></span><span class="below"></span></div>
          </div>
        </main>
      </div>
    `;
  }
}
